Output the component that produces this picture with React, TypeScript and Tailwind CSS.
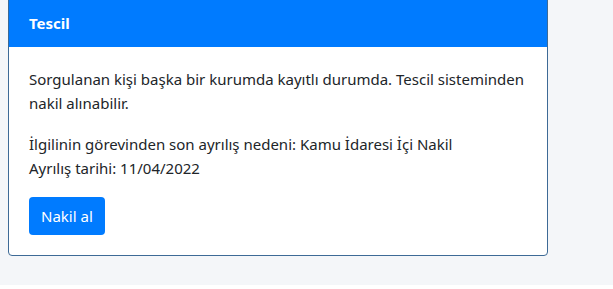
export default function App() {
  return (
    <div
      className="min-h-screen bg-[#f4f6f9] px-2 pb-2 pt-0 text-[#212529]"
      style={{ fontFamily: '"Noto Sans", "Open Sans", sans-serif' }}
    >
      <div className="-mt-1 w-[540px] overflow-hidden rounded-[4px] border border-[#3d6a96] bg-white">
        {/* Card header */}
        <div className="bg-[#007bff] px-5 pb-3 pt-[14px] text-[15px] leading-6 font-bold text-white">
          Tescil
        </div>
        {/* Card body */}
        <div className="p-5 text-[15px] leading-6">
          <p className="mb-[17px]">
            Sorgulanan kişi başka bir kurumda kayıtlı durumda. Tescil sisteminden nakil alınabilir.
          </p>
          <p className="mb-[17px]">
            İlgilinin görevinden son ayrılış nedeni: Kamu İdaresi İçi Nakil
            <br />
            Ayrılış tarihi: 11/04/2022
          </p>
          <button className="h-[38px] rounded-[4px] bg-[#007bff] px-3 text-[15px] text-white">
            Nakil al
          </button>
        </div>
      </div>
    </div>
  );
}
